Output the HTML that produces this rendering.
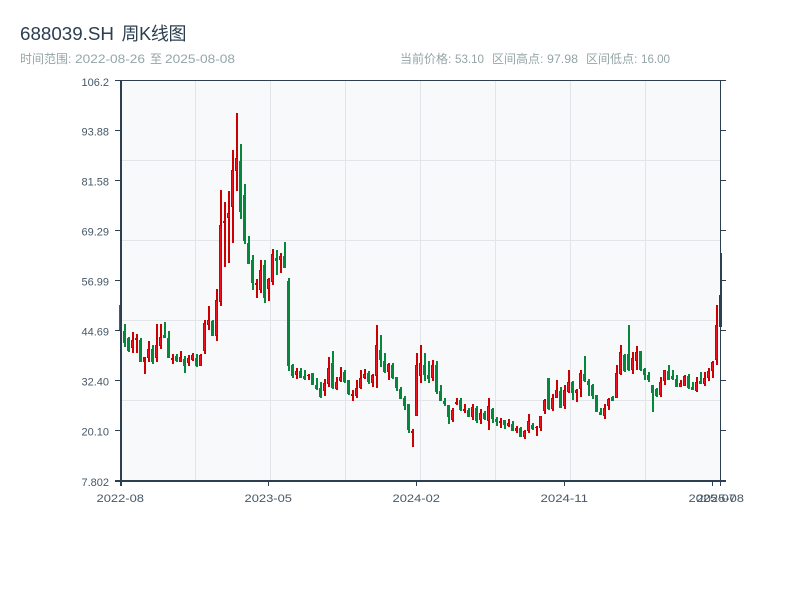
<!DOCTYPE html>
<html>
<head>
<meta charset="utf-8">
<style>
html,body{margin:0;padding:0;background:#fff;width:800px;height:600px;overflow:hidden}
svg{position:absolute;left:0;top:0}
text{font-family:"Liberation Sans","Noto Sans CJK SC",sans-serif}
</style>
</head>
<body>
<svg width="800" height="600" viewBox="0 0 800 600" xmlns="http://www.w3.org/2000/svg">
<rect width="800" height="600" fill="#fff"/>
<rect x="120" y="80" width="600" height="400" fill="#f8f9fa"/>
<path d="M195.5 80V480M270.5 80V480M345.5 80V480M420.5 80V480M495.5 80V480M570.5 80V480M645.5 80V480M120 160.5H720M120 240.5H720M120 320.5H720M120 400.5H720" stroke="#e2e4ea" stroke-width="1" fill="none"/>
<!-- green -->
<path fill="none" stroke="#05883c" stroke-width="2" d="M121 305V330M125 324V347M129 337V352M141 338V362M153 345V364M165 322V338M169 331V358M177 354V362M185 356V373M197 354V367M213 320V336M241 144V219M245 184V244M249 236V264M253 255V290M265 260V303M277 250V275M285 242V268M289 278V371M293 364V378M301 368V378M305 370V380M313 373V385M317 378V390M321 382V398M333 351V389M345 370V383M349 380V395M369 371V384M381 335V367M385 353V373M393 363V379M397 377V391M401 387V399M405 396V410M409 404V433M425 353V381M429 361V383M437 361V394M441 385V401M445 398V406M449 405V424M461 398V411M469 408V417M477 406V423M485 411V420M493 408V423M497 417V426M505 420V429M513 421V431M521 427V437M533 423V430M549 378V410M561 387V408M573 381V400M585 356V382M589 379V396M593 384V399M597 395V412M601 408V415M613 396V401M625 354V372M629 325V371M641 351V371M645 368V380M649 372V382M653 385V412M657 388V397M669 365V380M673 370V380M677 375V387M689 374V389M693 382V390M701 372V384"/>
<path fill="none" stroke="#05883c" stroke-width="3" d="M120.5 305V330M124.5 331V343M128.5 338V351M140.5 340V362M152.5 349V362M164.5 335V338M168.5 338V358M176.5 356V361M184.5 359V366M196.5 358V366M212.5 321V336M240.5 161V212M244.5 195V241M248.5 243V264M252.5 260V283M264.5 265V298M276.5 258V261M284.5 256V268M288.5 281V366M292.5 365V376M300.5 371V378M304.5 376V379M312.5 373V385M316.5 385V389M320.5 388V397M332.5 363V388M344.5 372V382M348.5 380V394M368.5 373V382M380.5 350V360M384.5 361V372M392.5 365V378M396.5 377V388M400.5 389V399M404.5 398V406M408.5 404V430M424.5 365V375M428.5 375V379M436.5 365V392M440.5 391V401M444.5 401V404M448.5 405V417M460.5 400V410M468.5 410V417M476.5 408V421M484.5 413V419M492.5 409V419M496.5 419V422M504.5 420V425M512.5 424V431M520.5 428V437M532.5 425V429M548.5 378V409M560.5 391V408M572.5 382V393M584.5 374V381M588.5 381V385M592.5 385V396M596.5 395V412M600.5 412V415M612.5 397V401M624.5 355V371M628.5 354V370M640.5 351V370M644.5 369V375M648.5 375V380M652.5 385V393M656.5 389V396M668.5 371V380M672.5 376V379M676.5 379V387M688.5 376V388M692.5 387V390M700.5 381V384"/>
<!-- red -->
<path fill="none" stroke="#cc0000" stroke-width="2" d="M133 332V353M137 334V353M145 357V374M149 341V362M157 324V362M161 324V349M173 354V364M181 351V362M189 355V366M193 353V361M201 354V366M205 320V354M209 306V330M217 289V341M221 190V306M225 202V267M229 191V263M233 150V243M237 113V191M257 279V298M261 260V293M269 278V301M273 249V285M281 253V273M297 368V379M309 374V380M325 379V396M329 357V387M337 377V390M341 367V382M353 390V401M357 380V398M361 370V389M365 369V379M373 374V387M377 325V388M389 363V380M413 429V447M417 353V416M421 345V383M433 360V381M453 408V422M457 398V405M465 404V413M473 404V420M481 409V424M489 398V430M501 418V428M509 419V427M517 426V433M525 430V439M529 414V433M537 426V436M541 416V431M545 399V414M553 394V411M557 380V398M565 385V409M569 370V393M577 389V402M581 370V397M605 404V419M609 398V410M617 365V398M621 345V375M633 352V374M637 346V370M661 377V397M665 370V385M681 380V387M685 375V386M697 377V392M705 372V386M709 368V381M713 361V378M717 305V365M721 253V327"/>
<path fill="none" stroke="#cc0000" stroke-width="3" d="M132.500 340V348M136.500 338V340M144.500 357V362M148.500 349V358M156.500 345V358M160.500 337V346M172.500 358V360M180.500 357V362M188.500 358V363M192.500 355V360M200.500 355V366M204.500 323V351M208.500 320V325M216.500 300V336M220.500 225V302M224.500 221V223M228.500 213V218M232.500 170V207M236.500 158V171M256.500 283V285M260.500 270V290M268.500 279V289M272.500 254V282M280.500 256V260M296.500 371V375M308.500 375V376M324.500 383V391M328.500 368V384M336.500 382V389M340.500 377V381M352.500 394V396M356.500 388V396M360.500 378V388M364.500 374V378M372.500 375V383M376.500 345V376M388.500 364V372M412.500 431V433M416.500 365V416M420.500 363V376M432.500 365V378M452.500 410V420M456.500 402V404M464.500 409V411M472.500 407V417M480.500 413V420M488.500 406V421M500.500 421V423M508.500 423V426M516.500 428V431M524.500 431V437M528.500 421V431M536.500 427V428M540.500 416V428M544.500 400V411M552.500 398V409M556.500 390V398M564.500 390V406M568.500 382V392M576.500 390V393M580.500 373V389M604.500 408V416M608.500 399V406M616.500 373V398M620.500 352V374M632.500 358V370M636.500 352V361M660.500 382V395M664.500 370V381M680.500 383V387M684.500 376V386M696.500 382V391M704.500 378V384M708.500 371V378M712.500 362V371M716.500 325V360M720.500 295V327"/>
<path fill="none" stroke="#f5101e" stroke-width="1" d="M132.500 341V347M148.500 350V357M156.500 346V357M160.500 338V345M180.500 358V361M188.500 359V362M192.500 356V359M200.500 356V365M204.500 324V350M208.500 321V324M216.500 301V335M220.500 226V301M228.500 214V217M232.500 171V206M236.500 159V170M260.500 271V289M268.500 280V288M272.500 255V281M280.500 257V259M296.500 372V374M324.500 384V390M328.500 369V383M336.500 383V388M340.500 378V380M356.500 389V395M360.500 379V387M364.500 375V377M372.500 376V382M376.500 346V375M388.500 365V371M416.500 366V415M420.500 364V375M432.500 366V377M452.500 411V419M472.500 408V416M480.500 414V419M488.500 407V420M508.500 424V425M516.500 429V430M524.500 432V436M528.500 422V430M540.500 417V427M544.500 401V410M552.500 399V408M556.500 391V397M564.500 391V405M568.500 383V391M576.500 391V392M580.500 374V388M604.500 409V415M608.500 400V405M616.500 374V397M620.500 353V373M632.500 359V369M636.500 353V360M660.500 383V394M664.500 371V380M680.500 384V386M684.500 377V385M696.500 383V390M704.500 379V383M708.500 372V377M712.500 363V370M716.500 326V359"/>
<!-- axes -->
<g fill="#2c3e50">
<rect x="115" y="80" width="611" height="1"/>
<rect x="120" y="80" width="2" height="406"/>
<rect x="720" y="80" width="1" height="406"/>
<rect x="115" y="480" width="611" height="2"/>
<path d="M115 130h5v1h-5zM115 180h5v1h-5zM115 230h5v1h-5zM115 280h5v1h-5zM115 330h5v1h-5zM115 380h5v1h-5zM115 430h5v1h-5zM721 130h5v1h-5zM721 180h5v1h-5zM721 230h5v1h-5zM721 280h5v1h-5zM721 330h5v1h-5zM721 380h5v1h-5zM721 430h5v1h-5zM268 482h1v4h-1zM416 482h1v4h-1zM564 482h1v4h-1zM712 482h1v4h-1z"/>
</g>
<!-- title -->
<text x="20" y="40" font-size="18" fill="#2c3e50" textLength="94" lengthAdjust="spacingAndGlyphs">688039.SH</text>
<text x="121.500" y="40" font-size="18" fill="#2c3e50" textLength="65">周K线图</text>
<g font-size="12" fill="#95a5a6">
<text x="20" y="63">时间范围:</text>
<text x="75" y="63" textLength="70" lengthAdjust="spacingAndGlyphs">2022-08-26</text>
<text x="150" y="63">至</text>
<text x="165" y="63" textLength="70" lengthAdjust="spacingAndGlyphs">2025-08-08</text>
<text x="400" y="63">当前价格:</text>
<text x="455" y="63" textLength="29" lengthAdjust="spacingAndGlyphs">53.10</text>
<text x="492" y="63">区间高点:</text>
<text x="547" y="63" textLength="31" lengthAdjust="spacingAndGlyphs">97.98</text>
<text x="586" y="63">区间低点:</text>
<text x="641" y="63" textLength="29" lengthAdjust="spacingAndGlyphs">16.00</text>
</g>
<!-- y labels -->
<g font-size="11" fill="#465868" text-anchor="end">
<text x="109" y="86">106.2</text>
<text x="109" y="135.500">93.88</text>
<text x="109" y="185.500">81.58</text>
<text x="109" y="235.500">69.29</text>
<text x="109" y="285.500">56.99</text>
<text x="109" y="335.500">44.69</text>
<text x="109" y="385.500">32.40</text>
<text x="109" y="435.500">20.10</text>
<text x="109" y="486">7.802</text>
</g>
<!-- x labels -->
<g font-size="11" fill="#465868">
<text x="96.500" y="502" textLength="47.500" lengthAdjust="spacingAndGlyphs">2022-08</text>
<text x="244.500" y="502" textLength="47.500" lengthAdjust="spacingAndGlyphs">2023-05</text>
<text x="392.500" y="502" textLength="47.500" lengthAdjust="spacingAndGlyphs">2024-02</text>
<text x="540.500" y="502" textLength="47.500" lengthAdjust="spacingAndGlyphs">2024-11</text>
<text x="688.500" y="502" textLength="47.500" lengthAdjust="spacingAndGlyphs">2025-07</text>
<text x="696.500" y="502" textLength="47.500" lengthAdjust="spacingAndGlyphs">2025-08</text>
</g>
</svg>
</body>
</html>
